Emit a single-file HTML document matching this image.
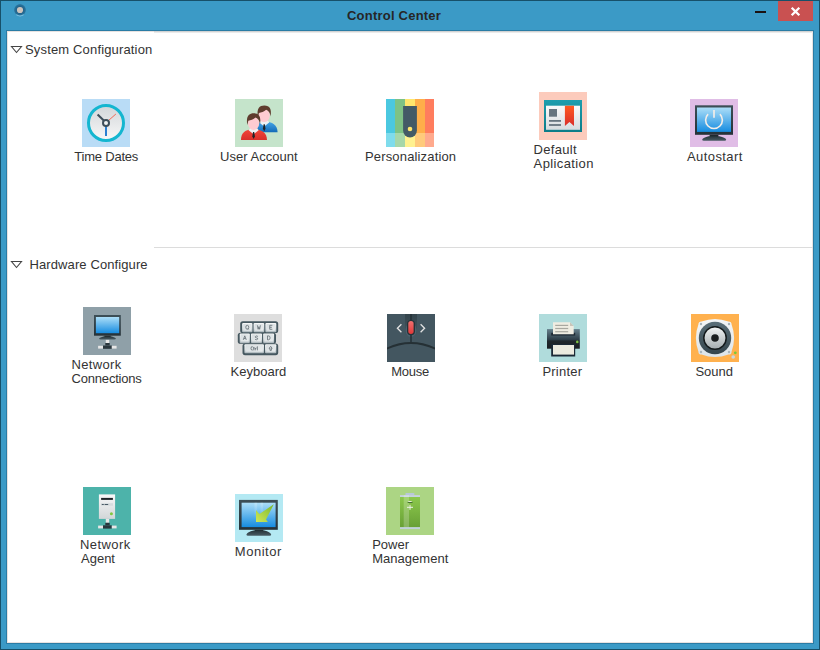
<!DOCTYPE html>
<html><head><meta charset="utf-8">
<style>
html,body{margin:0;padding:0;width:820px;height:650px;overflow:hidden;background:#3b9ac6;}
body{position:relative;font-family:"Liberation Sans",sans-serif;}
.a{position:absolute;}
#outer{left:0;top:0;width:818px;height:648px;border:1px solid #175069;background:#3b9ac6;}
#cbord{left:6px;top:30px;width:806px;height:612px;border:1px solid #2a7ca5;background:#fff;}
#content{left:7px;top:31px;width:806px;height:612px;background:#fff;box-shadow:inset 1px 1px 0 #e8e2e0, inset -1px -1px 0 #e8e2e0;}
.title{top:7px;font-weight:bold;font-size:13px;color:#262626;line-height:16px;white-space:nowrap;}
.hdr{font-size:13px;color:#333;line-height:14px;white-space:nowrap;}
.lbl{font-size:13px;color:#333;line-height:14px;white-space:nowrap;}
.tile{width:48px;height:48px;overflow:hidden;}
.tile svg{display:block;}
.sep{height:1px;background:#dcdcdc;}
</style></head><body>
<div class="a" id="outer"></div>
<div class="a" id="cbord"></div>
<div class="a" id="content"></div>
<div class="a title" style="left:347px;top:8px;letter-spacing:0.22px">Control Center</div>
<div class="a" style="left:778px;top:1px;width:35px;height:20px;background:#c95151"></div>
<svg class="a" style="left:778px;top:1px" width="35" height="20"><path d="M13.7 6.7 L21.3 14.3 M21.3 6.7 L13.7 14.3" stroke="#fff" stroke-width="2.3"/></svg>
<div class="a" style="left:755px;top:11px;width:11px;height:2px;background:#1a1212"></div>
<svg class="a" style="left:12px;top:2px" width="16" height="16"><defs><radialGradient id="appR" cx="0.5" cy="0.5" r="0.5"><stop offset="0.5" stop-color="#1f6088"/><stop offset="0.85" stop-color="#28729b"/><stop offset="1" stop-color="#3a96c2"/></radialGradient></defs><circle cx="8" cy="8" r="6.2" fill="url(#appR)"/><path d="M4.4 12.6 A6 6 0 0 0 11.6 12.6" fill="none" stroke="#8fd0ee" stroke-width="1.1" opacity="0.85"/><circle cx="8" cy="8" r="3.1" fill="#cbc3bc"/></svg>
<svg class="a" style="left:10px;top:45px" width="14" height="10"><path d="M1.5 1.5 H11.5 L6.5 7.5 Z" fill="none" stroke="#444" stroke-width="1.1"/></svg>
<div class="a sep" style="left:154px;top:31px;width:659px;background:#d2d2d2"></div><div class="a sep" style="left:154px;top:32px;width:659px;background:#ebebeb"></div>
<div class="a sep" style="left:154px;top:247px;width:659px"></div>
<svg class="a" style="left:10px;top:260px" width="14" height="10"><path d="M1.5 1.5 H11.5 L6.5 7.5 Z" fill="none" stroke="#444" stroke-width="1.1"/></svg>
<div class="a tile" style="left:82px;top:99px;background:#b9dcf6"><svg width="48" height="48" viewBox="0 0 48 48"><defs><linearGradient id="tdF" x1="0" y1="0" x2="0" y2="1"><stop offset="0" stop-color="#d2d6d9"/><stop offset="1" stop-color="#f8f8f8"/></linearGradient></defs><circle cx="24" cy="24" r="17.3" fill="url(#tdF)"/><circle cx="24" cy="24" r="17.5" fill="none" stroke="#14b6d0" stroke-width="3"/><path d="M21.8 21.5 L15.6 15.6" stroke="#3e4e5a" stroke-width="2.1" stroke-linecap="butt"/><path d="M24 27 L24 37" stroke="#2079cf" stroke-width="1.9"/><path d="M26.3 21.7 L33.9 15" stroke="#ef6b57" stroke-width="1"/><circle cx="24" cy="24" r="3" fill="#f0f2f2" stroke="#3e4e5a" stroke-width="2"/></svg></div>
<div class="a tile" style="left:235px;top:99px;background:#c5e4cb"><svg width="48" height="48" viewBox="0 0 48 48"><defs><linearGradient id="uaB" x1="0" y1="0" x2="0" y2="1"><stop offset="0" stop-color="#48a8e8"/><stop offset="1" stop-color="#136bb8"/></linearGradient><linearGradient id="uaR" x1="0" y1="0" x2="0" y2="1"><stop offset="0" stop-color="#f2473a"/><stop offset="1" stop-color="#d9302a"/></linearGradient></defs><g transform="translate(10.6 -7.8)"><path d="M6 41 C6 33.5 10 30.5 18.5 30.2 C27 30.5 31.8 33.5 32 41 Z" fill="url(#uaB)"/><path d="M13.6 31.2 L18.6 35.2 L23.6 31.2 L22.3 29.3 L15 29.3 Z" fill="#eef2f4"/><path d="M18 33 L19.2 33 L19.9 37.5 L18.6 40 L17.3 37.5 Z" fill="#1e2428"/><ellipse cx="18.6" cy="24.3" rx="5.6" ry="6.6" fill="#ffcbd1"/><path d="M12.3 26 C10.8 17 14 14.3 18.7 14.3 C24.3 14.3 26.2 18 25 25.2 C24.4 21.3 23.3 19.8 20.5 18.5 C18.6 20.3 15.4 21.3 13.3 21.8 Z" fill="#5f3c2e"/></g><g transform="translate(0 0)"><path d="M6 41 C6 33.5 10 30.5 18.5 30.2 C27 30.5 31.8 33.5 32 41 Z" fill="url(#uaR)"/><path d="M13.6 31.2 L18.6 35.2 L23.6 31.2 L22.3 29.3 L15 29.3 Z" fill="#eef2f4"/><path d="M18 33 L19.2 33 L19.9 37.5 L18.6 40 L17.3 37.5 Z" fill="#1e2428"/><ellipse cx="18.6" cy="24.3" rx="5.6" ry="6.6" fill="#ffcbd1"/><path d="M12.3 26 C10.8 17 14 14.3 18.7 14.3 C24.3 14.3 26.2 18 25 25.2 C24.4 21.3 23.3 19.8 20.5 18.5 C18.6 20.3 15.4 21.3 13.3 21.8 Z" fill="#5f3c2e"/></g></svg></div>
<div class="a tile" style="left:386px;top:99px;background:#ffffff"><svg width="48" height="48" viewBox="0 0 48 48"><defs></defs><rect x="0" y="0" width="9" height="34" fill="#4bc8e0"/><rect x="9" y="0" width="10" height="34" fill="#7ec285"/><rect x="19" y="0" width="10" height="34" fill="#ffe66d"/><rect x="29" y="0" width="10" height="34" fill="#ffae4a"/><rect x="39" y="0" width="9" height="34" fill="#ff7d5e"/><rect x="0" y="34" width="9" height="14" fill="#7fdcec"/><rect x="9" y="34" width="10" height="14" fill="#a7d7a9"/><rect x="19" y="34" width="10" height="14" fill="#fff18f"/><rect x="29" y="34" width="10" height="14" fill="#ffca7b"/><rect x="39" y="34" width="9" height="14" fill="#ffaa8e"/><path d="M17.1 7 H30.9 V31.5 A6.9 6.9 0 0 1 17.1 31.5 Z" fill="#435a66"/><circle cx="24" cy="30" r="2.3" fill="#ffe66d"/></svg></div>
<div class="a tile" style="left:539px;top:92px;background:#fccbbc"><svg width="48" height="48" viewBox="0 0 48 48"><defs><linearGradient id="daT" x1="0" y1="0" x2="0" y2="1"><stop offset="0" stop-color="#1e9eae"/><stop offset="1" stop-color="#0c7c88"/></linearGradient><linearGradient id="daW" x1="0" y1="0" x2="0" y2="1"><stop offset="0" stop-color="#fafafa"/><stop offset="1" stop-color="#d6dcdf"/></linearGradient><linearGradient id="daR" x1="0" y1="0" x2="0" y2="1"><stop offset="0" stop-color="#ff5a20"/><stop offset="1" stop-color="#d92e2a"/></linearGradient></defs><rect x="5" y="8" width="38" height="32" fill="url(#daT)"/><rect x="7" y="13.7" width="34" height="24.1" fill="url(#daW)"/><rect x="10" y="17" width="8" height="7.7" fill="#66757f"/><rect x="10" y="28" width="12" height="1.8" fill="#66757f"/><rect x="10" y="32.1" width="12" height="1.8" fill="#66757f"/><path d="M25.9 13.7 H35 V34 L30.45 30 L25.9 34 Z" fill="url(#daR)"/></svg></div>
<div class="a tile" style="left:690px;top:99px;background:#e0bde6"><svg width="48" height="48" viewBox="0 0 48 48"><defs><linearGradient id="asZ" x1="0" y1="0" x2="0" y2="1"><stop offset="0" stop-color="#3d4f57"/><stop offset="1" stop-color="#263238"/></linearGradient><linearGradient id="asS" x1="0" y1="0" x2="0" y2="1"><stop offset="0" stop-color="#acdef8"/><stop offset="1" stop-color="#168ce0"/></linearGradient><linearGradient id="asB" x1="0" y1="0" x2="0" y2="1"><stop offset="0" stop-color="#27353b"/><stop offset="1" stop-color="#4a5c64"/></linearGradient></defs><rect x="5" y="6.3" width="38" height="29.499999999999996" fill="url(#asZ)"/><rect x="7" y="8.5" width="34" height="24.4" fill="url(#asS)"/><rect x="19.6" y="35.8" width="8.799999999999997" height="2.5" fill="#1f2a2f"/><path d="M18.6 37.3 L29.4 37.3 Q35.2 38.699999999999996 36.2 40.400000000000006 Q36.2 41.7 34.6 41.7 L13.799999999999999 41.7 Q12.2 41.7 12.2 40.400000000000006 Q13.2 38.699999999999996 18.6 37.3 Z" fill="url(#asB)"/><path d="M18.1 15.1 A8.4 8.4 0 1 0 29.9 15.1" fill="none" stroke="#f2ede8" stroke-width="1.6"/><path d="M24 11 V18.8" stroke="#f2ede8" stroke-width="1.7"/></svg></div>
<div class="a tile" style="left:83px;top:307px;background:#8fa0a8"><svg width="48" height="48" viewBox="0 0 48 48"><defs><linearGradient id="ncZ" x1="0" y1="0" x2="0" y2="1"><stop offset="0" stop-color="#3d4f57"/><stop offset="1" stop-color="#263238"/></linearGradient><linearGradient id="ncS" x1="0" y1="0" x2="0" y2="1"><stop offset="0" stop-color="#acdef8"/><stop offset="1" stop-color="#168ce0"/></linearGradient><linearGradient id="ncB" x1="0" y1="0" x2="0" y2="1"><stop offset="0" stop-color="#27353b"/><stop offset="1" stop-color="#4a5c64"/></linearGradient></defs><rect x="11" y="8" width="26.799999999999997" height="20.7" fill="url(#ncZ)"/><rect x="12.9" y="10" width="23.300000000000004" height="16.2" fill="url(#ncS)"/><rect x="21.4" y="28.7" width="6.300000000000001" height="1.8000000000000007" fill="#1f2a2f"/><path d="M20.4 29.5 L28.7 29.5 Q31.9 30.9 32.9 31.2 Q32.9 32.5 31.299999999999997 32.5 L17.700000000000003 32.5 Q16.1 32.5 16.1 31.2 Q17.1 30.9 20.4 29.5 Z" fill="url(#ncB)"/><rect x="22.8" y="32.9" width="3.4" height="3.1000000000000014" fill="#e8e8e8"/><rect x="22.3" y="36" width="4.4" height="2.5" fill="#2a363c"/><rect x="20" y="38.5" width="8.8" height="3.3" fill="#2a363c"/><rect x="15.1" y="38.8" width="4.9" height="2.8" fill="#e6e6e6"/><rect x="28.8" y="38.8" width="4.8" height="2.8" fill="#e6e6e6"/></svg></div>
<div class="a tile" style="left:234px;top:314px;background:#dedede"><svg width="48" height="48" viewBox="0 0 48 48"><defs><linearGradient id="kbK" x1="0" y1="0" x2="0" y2="1"><stop offset="0" stop-color="#f6f8f8"/><stop offset="0.6" stop-color="#d9dfe2"/><stop offset="1" stop-color="#aab5ba"/></linearGradient><linearGradient id="kbI" x1="0" y1="0" x2="1" y2="1"><stop offset="0" stop-color="#d6dcdf"/><stop offset="1" stop-color="#e9edee"/></linearGradient></defs><rect x="6.2" y="7.2" width="38.0" height="11.8" rx="2.6" fill="#465860"/><rect x="3.8" y="18.7" width="38.2" height="11.100000000000001" rx="2.6" fill="#465860"/><rect x="8.5" y="29.5" width="35.7" height="11.700000000000003" rx="2.6" fill="#465860"/><rect x="8.10" y="9.10" width="10.35" height="9.20" rx="1" fill="url(#kbK)"/><rect x="9.30" y="10.10" width="7.95" height="6.60" fill="url(#kbI)"/><path transform="translate(11.77 11.30)" d="M1.5 0 A1.5 2 0 1 0 1.5 4 A1.5 2 0 1 0 1.5 0 M2 3 L3 4.2" fill="none" stroke="#5f6b71" stroke-width="0.8"/><rect x="19.55" y="9.10" width="10.70" height="9.20" rx="1" fill="url(#kbK)"/><rect x="20.75" y="10.10" width="8.30" height="6.60" fill="url(#kbI)"/><path transform="translate(23.40 11.30)" d="M0 0 L0.75 4 L1.5 1.4 L2.25 4 L3 0" fill="none" stroke="#5f6b71" stroke-width="0.8"/><rect x="31.35" y="9.10" width="10.95" height="9.20" rx="1" fill="url(#kbK)"/><rect x="32.55" y="10.10" width="8.55" height="6.60" fill="url(#kbI)"/><path transform="translate(35.33 11.30)" d="M3 0 H0.4 V4 H3 M0.4 2 H2.5" fill="none" stroke="#5f6b71" stroke-width="0.8"/><rect x="5.70" y="19.40" width="10.15" height="9.70" rx="1" fill="url(#kbK)"/><rect x="6.90" y="20.40" width="7.75" height="7.10" fill="url(#kbI)"/><path transform="translate(9.27 21.85)" d="M0 4 L1.5 0 L3 4 M0.7 2.7 H2.3" fill="none" stroke="#5f6b71" stroke-width="0.8"/><rect x="16.95" y="19.40" width="11.10" height="9.70" rx="1" fill="url(#kbK)"/><rect x="18.15" y="20.40" width="8.70" height="7.10" fill="url(#kbI)"/><path transform="translate(21.00 21.85)" d="M2.9 0.6 Q1.5 -0.4 0.4 0.7 Q0 1.9 1.5 2 Q3 2.1 2.7 3.3 Q1.5 4.4 0.1 3.5" fill="none" stroke="#5f6b71" stroke-width="0.8"/><rect x="29.15" y="19.40" width="10.95" height="9.70" rx="1" fill="url(#kbK)"/><rect x="30.35" y="20.40" width="8.55" height="7.10" fill="url(#kbI)"/><path transform="translate(33.12 21.85)" d="M0.4 0 V4 H1.2 Q3 4 3 2 Q3 0 1.2 0 Z" fill="none" stroke="#5f6b71" stroke-width="0.8"/><rect x="10.40" y="30.20" width="19.55" height="9.10" rx="1" fill="url(#kbK)"/><rect x="11.60" y="31.20" width="17.15" height="6.50" fill="url(#kbI)"/><path transform="translate(16.98 32.35)" d="M1.8 0.4 Q0 -0.2 0 2 Q0 4.2 1.8 3.7 M2.8 0.6 V4 M2.3 1.6 H3.6 M4.3 1.6 V4 M4.3 2.4 Q4.8 1.5 5.6 1.6 M6.4 0 V4" fill="none" stroke="#5f6b71" stroke-width="0.8"/><rect x="31.05" y="30.20" width="11.25" height="9.10" rx="1" fill="url(#kbK)"/><rect x="32.25" y="31.20" width="8.85" height="6.50" fill="url(#kbI)"/><path transform="translate(35.18 32.35)" d="M1.5 0 L3 2 H2.2 V4 H0.8 V2 H0 Z" fill="none" stroke="#5f6b71" stroke-width="0.8"/></svg></div>
<div class="a tile" style="left:387px;top:314px;background:#435660"><svg width="48" height="48" viewBox="0 0 48 48"><defs><linearGradient id="msC" x1="0" y1="0" x2="0" y2="1"><stop offset="0" stop-color="#34444c"/><stop offset="1" stop-color="#435660"/></linearGradient><linearGradient id="msR" x1="0" y1="0" x2="0" y2="1"><stop offset="0" stop-color="#f07070"/><stop offset="1" stop-color="#e23838"/></linearGradient></defs><rect x="18" y="0" width="12" height="22" fill="url(#msC)"/><ellipse cx="24" cy="16" rx="5.5" ry="7" fill="#5a7584" opacity="0.45"/><rect x="23.2" y="0" width="1.6" height="28.5" fill="#263238"/><rect x="20" y="5.9" width="8" height="15.4" rx="4" fill="#263238"/><rect x="21.3" y="7" width="5.3" height="13" rx="2.65" fill="url(#msR)"/><path d="M14.4 10.3 L10.4 14.2 L14.4 18.2" fill="none" stroke="#e2e2e2" stroke-width="1.3"/><path d="M33.6 10.3 L37.6 14.2 L33.6 18.2" fill="none" stroke="#e2e2e2" stroke-width="1.3"/><path d="M-1 35 Q24 23 49 35" fill="none" stroke="#253035" stroke-width="1.9"/></svg></div>
<div class="a tile" style="left:539px;top:314px;background:#b0dcdc"><svg width="48" height="48" viewBox="0 0 48 48"><defs><linearGradient id="prB" x1="0" y1="0" x2="0" y2="1"><stop offset="0" stop-color="#66808c"/><stop offset="0.55" stop-color="#2c3c46"/><stop offset="0.6" stop-color="#20282c"/><stop offset="1" stop-color="#1a1e22"/></linearGradient></defs><rect x="8" y="15.1" width="32.8" height="19.6" fill="url(#prB)"/><rect x="12.2" y="18.8" width="24" height="2.8" fill="#1e2a34"/><path d="M14 8.3 H31 L34.7 12 V20.3 H14 Z" fill="#efede2"/><path d="M31 8.3 L34.7 12 H31 Z" fill="#c8c4b8"/><rect x="16.2" y="10.8" width="13" height="1.2" fill="#a8a8a0"/><rect x="16.2" y="13.9" width="13" height="1.2" fill="#a8a8a0"/><rect x="16.2" y="17.1" width="13" height="1.2" fill="#a8a8a0"/><rect x="12.2" y="30" width="24" height="12.5" fill="#1c2a36"/><rect x="14" y="31" width="21" height="9.6" fill="#ecebdf"/><circle cx="38.3" cy="27.9" r="1.3" fill="#7cc242"/></svg></div>
<div class="a tile" style="left:691px;top:314px;background:#ffb14e"><svg width="48" height="48" viewBox="0 0 48 48"><defs><linearGradient id="sdP" x1="0" y1="0" x2="0" y2="1"><stop offset="0" stop-color="#f4f6f8"/><stop offset="1" stop-color="#dce3e8"/></linearGradient><linearGradient id="sdR" x1="0" y1="0" x2="0" y2="1"><stop offset="0" stop-color="#5b6f79"/><stop offset="1" stop-color="#34444c"/></linearGradient><linearGradient id="sdC" x1="0" y1="0" x2="0" y2="1"><stop offset="0" stop-color="#f2f4f4"/><stop offset="1" stop-color="#a4acb0"/></linearGradient></defs><path d="M10.6 7.4 Q24 2.4 37.4 7.4 Q40.6 7.4 40.6 10.6 Q45.6 24 40.6 37.4 Q40.6 40.6 37.4 40.6 Q24 45.6 10.6 40.6 Q7.4 40.6 7.4 37.4 Q2.4 24 7.4 10.6 Q7.4 7.4 10.6 7.4 Z" fill="url(#sdP)"/><circle cx="10" cy="10" r="1.2" fill="#a8b4ba"/><circle cx="38" cy="10" r="1.2" fill="#a8b4ba"/><circle cx="10" cy="38" r="1.2" fill="#a8b4ba"/><circle cx="38" cy="38" r="1.2" fill="#a8b4ba"/><circle cx="24" cy="24" r="16.2" fill="url(#sdR)"/><circle cx="24" cy="24" r="11.2" fill="url(#sdC)" stroke="#141a1c" stroke-width="1.5"/><circle cx="24" cy="24" r="3.8" fill="#1a1d1f"/><circle cx="44.3" cy="38.8" r="1.4" fill="#78c83c"/><circle cx="42.2" cy="43" r="1.8" fill="#c8d8e4"/></svg></div>
<div class="a tile" style="left:83px;top:487px;background:#4db3aa"><svg width="48" height="48" viewBox="0 0 48 48"><defs><linearGradient id="naT" x1="0" y1="0" x2="0" y2="1"><stop offset="0" stop-color="#f8f8f8"/><stop offset="1" stop-color="#d2d6d8"/></linearGradient></defs><rect x="15.9" y="7.4" width="16.2" height="24.5" fill="url(#naT)"/><rect x="18.1" y="10.9" width="11.8" height="2" fill="#1e2428"/><rect x="18" y="16.2" width="12" height="2.6" fill="#d6dcde"/><rect x="18.8" y="17" width="2" height="1" fill="#4a5a66"/><rect x="21.6" y="17" width="3.6" height="1" fill="#4a5a66"/><circle cx="28.4" cy="26.7" r="1.5" fill="#80c840"/><rect x="22.8" y="31.9" width="3.4" height="3.8999999999999986" fill="#e8e8e8"/><rect x="22.3" y="35.8" width="4.4" height="2.5" fill="#2a363c"/><rect x="20" y="38.3" width="8.8" height="3.3" fill="#2a363c"/><rect x="15.1" y="38.599999999999994" width="4.9" height="2.8" fill="#e6e6e6"/><rect x="28.8" y="38.599999999999994" width="4.8" height="2.8" fill="#e6e6e6"/></svg></div>
<div class="a tile" style="left:235px;top:494px;background:#b4e9f3"><svg width="48" height="48" viewBox="0 0 48 48"><defs><linearGradient id="mnZ" x1="0" y1="0" x2="0" y2="1"><stop offset="0" stop-color="#3d4f57"/><stop offset="1" stop-color="#263238"/></linearGradient><linearGradient id="mnS" x1="0" y1="0" x2="0" y2="1"><stop offset="0" stop-color="#acdef8"/><stop offset="1" stop-color="#168ce0"/></linearGradient><linearGradient id="mnB" x1="0" y1="0" x2="0" y2="1"><stop offset="0" stop-color="#27353b"/><stop offset="1" stop-color="#4a5c64"/></linearGradient><linearGradient id="mnL" x1="0" y1="0" x2="0" y2="1"><stop offset="0" stop-color="#fff" stop-opacity="0.22"/><stop offset="1" stop-color="#fff" stop-opacity="0"/></linearGradient><linearGradient id="mnA" x1="0" y1="1" x2="1" y2="0"><stop offset="0" stop-color="#cfe858"/><stop offset="1" stop-color="#7ab82c"/></linearGradient></defs><rect x="4" y="5.9" width="38.8" height="29.9" fill="url(#mnZ)"/><rect x="6.6" y="8.7" width="34.0" height="24.400000000000002" fill="url(#mnS)"/><rect x="19.6" y="35.8" width="8.799999999999997" height="1.8000000000000043" fill="#1f2a2f"/><path d="M18.6 36.6 L29.4 36.6 Q35.2 38.0 36.2 40.400000000000006 Q36.2 41.7 34.6 41.7 L13.0 41.7 Q11.4 41.7 11.4 40.400000000000006 Q12.4 38.0 18.6 36.6 Z" fill="url(#mnB)"/><rect x="19.5" y="8.7" width="2.6" height="16" fill="url(#mnL)"/><rect x="25.5" y="8.7" width="2.6" height="16" fill="url(#mnL)"/><path d="M21 15.9 L24.4 20 L38.8 10.3 L31 25.5 L32.9 28 L21 28 Z" fill="url(#mnA)"/></svg></div>
<div class="a tile" style="left:386px;top:487px;background:#acd584"><svg width="48" height="48" viewBox="0 0 48 48"><defs><linearGradient id="pmG" x1="0" y1="0" x2="0" y2="1"><stop offset="0" stop-color="#8cc84c"/><stop offset="1" stop-color="#68a036"/></linearGradient></defs><rect x="19.4" y="6" width="9" height="2.2" rx="0.8" fill="#b8c8d8"/><rect x="14" y="8.1" width="20" height="2" fill="#c6d2de"/><rect x="14" y="10" width="20" height="30.2" fill="url(#pmG)"/><rect x="17.7" y="8.1" width="5.3" height="34" fill="#ffffff" opacity="0.22"/><rect x="14" y="40.2" width="20" height="1.9" fill="#c0d0dc"/><path d="M21.6 15.3 Q24 12.6 26.6 15.3 Z" fill="#eef2ea"/><rect x="21.6" y="15.1" width="5" height="0.9" fill="#3c6a28"/><rect x="21" y="19.8" width="6" height="1" fill="#eef2ea"/><rect x="23.5" y="17.8" width="1" height="5" fill="#eef2ea"/></svg></div>
<div class="a hdr" id="L_sysconf" style="left:25.00px;top:43.20px;letter-spacing:0.158px;">System Configuration</div>
<div class="a hdr" id="L_hwconf" style="left:29.50px;top:258.10px;letter-spacing:0.103px;">Hardware Configure</div>
<div class="a lbl" id="L_TimeDates" style="left:74.20px;top:150.10px;letter-spacing:-0.200px;">Time Dates</div>
<div class="a lbl" id="L_UserAcc" style="left:220.00px;top:150.00px;letter-spacing:0.036px;">User Account</div>
<div class="a lbl" id="L_Pers" style="left:365.00px;top:150.10px;letter-spacing:0.157px;">Personalization</div>
<div class="a lbl" id="L_Default" style="left:533.60px;top:143.00px;letter-spacing:0.317px;">Default</div>
<div class="a lbl" id="L_Aplic" style="left:533.60px;top:156.70px;letter-spacing:0.389px;">Aplication</div>
<div class="a lbl" id="L_Autostart" style="left:687.00px;top:150.10px;letter-spacing:0.412px;">Autostart</div>
<div class="a lbl" id="L_Network1" style="left:71.60px;top:358.30px;letter-spacing:0.317px;">Network</div>
<div class="a lbl" id="L_Connections" style="left:71.60px;top:372.10px;letter-spacing:-0.200px;">Connections</div>
<div class="a lbl" id="L_Keyboard" style="left:230.60px;top:365.30px;letter-spacing:0.014px;">Keyboard</div>
<div class="a lbl" id="L_Mouse" style="left:391.20px;top:365.30px;letter-spacing:-0.275px;">Mouse</div>
<div class="a lbl" id="L_Printer" style="left:542.40px;top:365.30px;letter-spacing:0.217px;">Printer</div>
<div class="a lbl" id="L_Sound" style="left:695.40px;top:365.30px;">Sound</div>
<div class="a lbl" id="L_Network2" style="left:80.00px;top:538.10px;letter-spacing:0.417px;">Network</div>
<div class="a lbl" id="L_Agent" style="left:81.00px;top:551.80px;">Agent</div>
<div class="a lbl" id="L_Monitor" style="left:234.80px;top:545.20px;letter-spacing:0.517px;">Monitor</div>
<div class="a lbl" id="L_Power" style="left:372.20px;top:538.10px;">Power</div>
<div class="a lbl" id="L_Mgmt" style="left:372.20px;top:551.80px;letter-spacing:0.033px;">Management</div>
</body></html>
